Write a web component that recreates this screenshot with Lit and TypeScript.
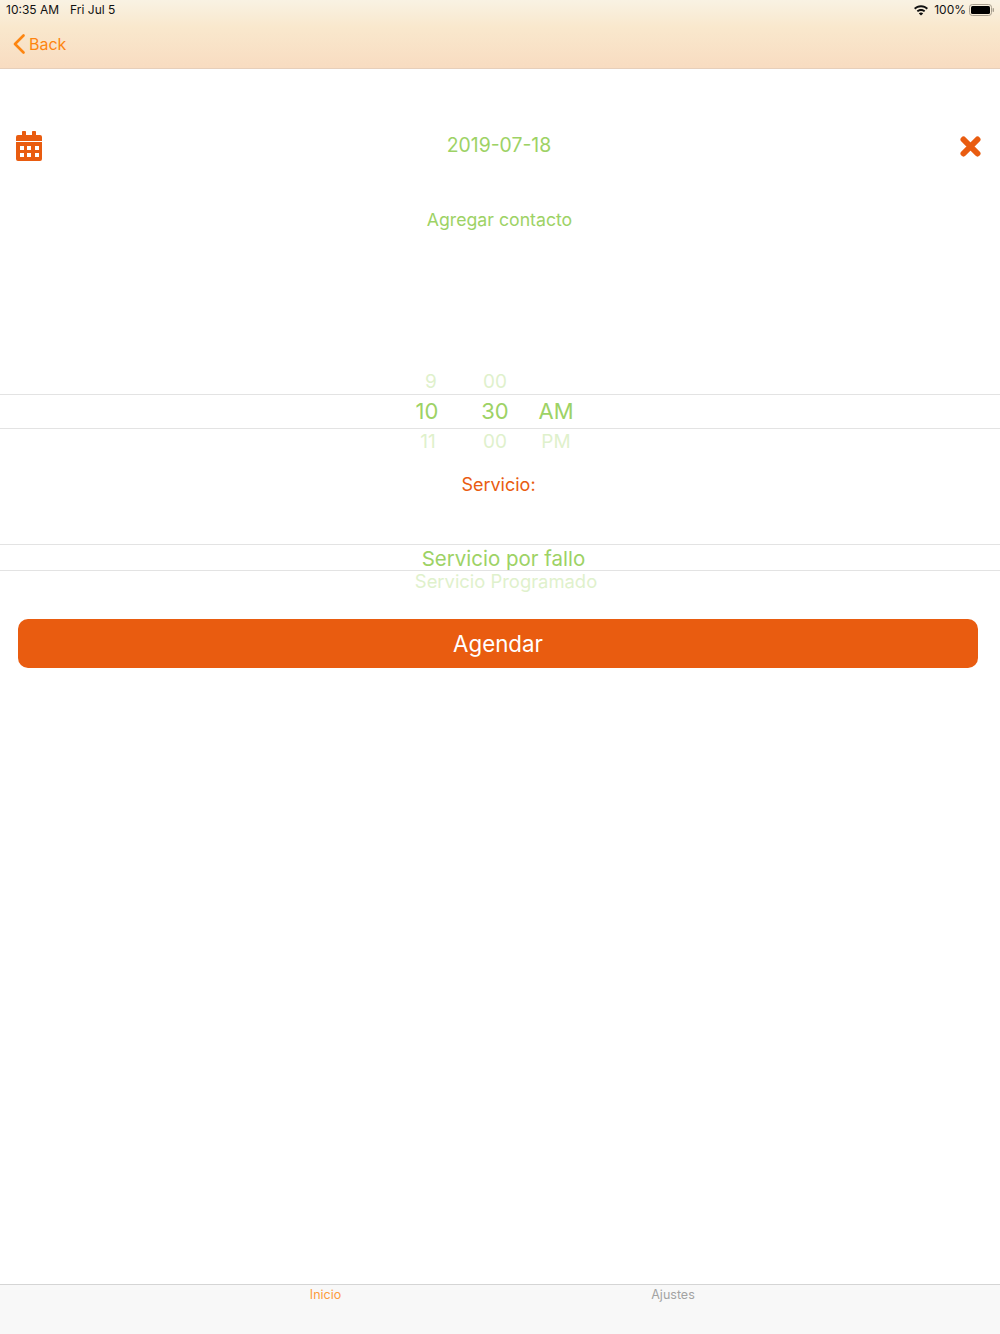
import { LitElement, html, css } from "lit";
import { customElement } from "lit/decorators.js";

@customElement("app-root")
export class AppRoot extends LitElement {
  static styles = css`
    :host { display: flex; flex-direction: column; width: 1000px; height: 1334px; background: #fff; overflow: hidden;
      font-family: Inter, "Liberation Sans", sans-serif; font-size: 20px; color: #9dd265; }
    .header { height: 68px; border-bottom: 1px solid #e6cfbb; background: linear-gradient(#f9f2e3 0%, #f9e8cd 40%, #f8dcc1 100%); display: flex; flex-direction: column; }
    .status { height: 19px; padding: 0 5px 0 6px; display: flex; align-items: center; justify-content: space-between; font-size: 12px; color: #111; }
    .status-left { display: flex; gap: 11px; }
    .status-right { display: flex; align-items: center; }
    .pct { margin: 0 3px 0 4px; }
    .wifi { margin-right: 1px; }
    .nav { flex: 1; display: flex; align-items: center; gap: 4px; padding: 0 0 0 13px; color: #fd8510; font-size: 16px; }
    .date-row { margin-top: 61px; height: 32px; padding: 0 19px 0 16px; display: flex; align-items: center; justify-content: space-between; font-size: 19.4px; }
    .date { margin: -2px 0 0 -4px; }
    .contact { margin-top: 41px; height: 32px; display: flex; align-items: center; justify-content: center; font-size: 17.7px; padding-right: 1px; }
    .tp { margin-top: 137px; height: 79px; }
    .line { display: grid; grid-template-columns: 60px 76px 46px; padding-left: 397px; font-size: 22px; text-align: center; }
    .line.far { height: 22px; line-height: 22px; font-size: 19px; color: #dff1cc; }
    .line.far.first span { position: relative; top: -1px; }
    .line.far.last span { position: relative; top: 2px; }
    .line.far .c9 { padding-left: 8px; }
    .line.far .c11 { padding-left: 2px; }
    .line.sel { height: 35px; line-height: 32px; border-top: 1px solid #e3e3e3; border-bottom: 1px solid #e3e3e3; box-sizing: border-box; }
    .service-label { margin-top: 22px; height: 24px; line-height: 24px; text-align: center; font-size: 18px; color: #e95c10; padding-right: 3px; }
    .sp { margin-top: 47px; height: 51px; text-align: center; }
    .sp-sel { height: 27px; box-sizing: border-box; border-top: 1px solid #e3e3e3; border-bottom: 1px solid #e3e3e3; line-height: 27px; font-size: 20.5px; padding-left: 7px; }
    .sp-next { font-size: 18.4px; line-height: 20px; color: #dff1cc; padding-left: 12px; }
    .btn { margin: 24px 22px 0 18px; height: 49px; border-radius: 10px; background: #e95c10; color: #fff; display: flex; align-items: center; justify-content: center; font-size: 22.3px; }
    .spacer { flex: 1; }
    .tabs { height: 49px; background: #f8f8f8; border-top: 1px solid #d5d5d5; display: grid; grid-template-columns: 348px 348px; padding-left: 151px; font-size: 12.5px; line-height: 20px; text-align: center; color: #a3a3a3; }
    .tab.active { color: #fd9c3d; padding-left: 1px; }
    svg { display: block; }
  `;

  render() {
    return html`
      <header class="header">
        <div class="status">
          <div class="status-left"><span>10:35 AM</span><span>Fri Jul 5</span></div>
          <div class="status-right">
            <svg class="wifi" width="16" height="12" viewBox="0 0 16 12"><path fill="#111" d="M8 1.2C5.200 1.200 2.800 2.300 1 4l1.400 1.500C3.900 4.100 5.800 3.300 8 3.300s4.100.8 5.600 2.200L15 4C13.200 2.300 10.800 1.200 8 1.200zM8 5c-1.700 0-3.200.7-4.300 1.700L5 8.100C5.800 7.400 6.800 7 8 7s2.200.4 3 1.100l1.300-1.400C11.200 5.700 9.700 5 8 5zM8 8.500c-.9 0-1.600.3-2.200.9L8 11.500l2.200-2.100c-.6-.6-1.300-.9-2.200-.9z"/></svg>
            <span class="pct">100%</span>
            <svg width="26" height="12" viewBox="0 0 26 12"><rect x=".5" y=".5" width="22" height="11" rx="2.800" fill="none" stroke="#a89f8f"/><rect x="2" y="2" width="19" height="8" rx="1.500" fill="#000"/><rect x="23.600" y="4" width="1.400" height="4" rx=".7" fill="#a89f8f"/></svg>
          </div>
        </div>
        <div class="nav">
          <svg width="12" height="20" viewBox="0 0 12 20"><path d="M10.500 1.500 2 10l8.500 8.500" fill="none" stroke="#fd8510" stroke-width="2.600" stroke-linecap="round" stroke-linejoin="round"/></svg>
          <span>Back</span>
        </div>
      </header>

      <div class="date-row">
        <svg width="26" height="30" viewBox="0 0 26 30">
          <path fill="#e95c10" fill-rule="evenodd" d="M6.800 0h2.400a.8.8 0 0 1 .8.8V4h6V.8a.8.8 0 0 1 .8-.8h2.400a.8.8 0 0 1 .8.8V4H24a2 2 0 0 1 2 2v4H0V6a2 2 0 0 1 2-2h4V.8a.8.8 0 0 1 .8-.8zM0 11h26v17a2 2 0 0 1-2 2H2a2 2 0 0 1-2-2zM4 15v4h4v-4zm7 0v4h4v-4zm8 0v4h4v-4zM4 22v4h4v-4zm7 0v4h4v-4zm8 0v4h4v-4z"/>
        </svg>
        <span class="date">2019-07-18</span>
        <svg width="21" height="21" viewBox="0 0 21 21"><path d="M3.500 3.500l14 14M17.500 3.500l-14 14" stroke="#e95c10" stroke-width="6" stroke-linecap="round"/></svg>
      </div>

      <div class="contact">Agregar contacto</div>

      <div class="tp">
        <div class="line far first"><span class="c9">9</span><span>00</span><span></span></div>
        <div class="line sel"><span>10</span><span>30</span><span>AM</span></div>
        <div class="line far last"><span class="c11">11</span><span>00</span><span>PM</span></div>
      </div>

      <div class="service-label">Servicio:</div>

      <div class="sp">
        <div class="sp-sel">Servicio por fallo</div>
        <div class="sp-next">Servicio Programado</div>
      </div>

      <div class="btn">Agendar</div>
      <div class="spacer"></div>

      <nav class="tabs">
        <div class="tab active">Inicio</div>
        <div class="tab">Ajustes</div>
      </nav>
    `;
  }
}
